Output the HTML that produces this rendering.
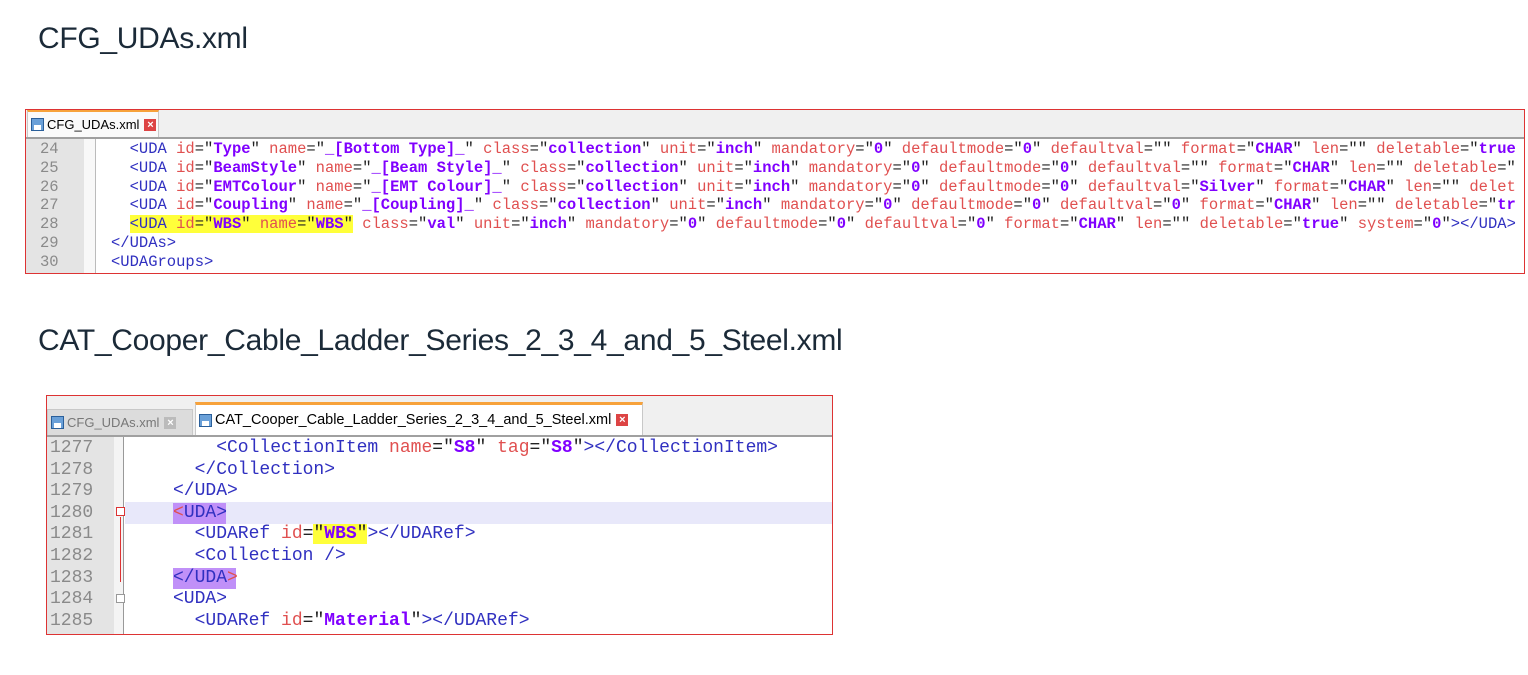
<!DOCTYPE html>
<html><head><meta charset="utf-8"><style>
body{margin:0;width:1528px;height:675px;background:#fff;position:relative;overflow:hidden;font-family:"Liberation Sans",Arial,sans-serif}
.h{position:absolute;left:38px;font-size:30px;color:#1b2a38;letter-spacing:-0.3px}
.box{position:absolute;border:1px solid #d33;background:#fff;overflow:hidden}
.tabbar{position:absolute;left:0;top:0;right:0;background:#f0f0f0;border-bottom:2px solid #a0a0a0}
.tab{position:absolute;top:4px;height:100%;font-size:13px;color:#000;display:flex;align-items:center;padding-left:3px;box-sizing:border-box;background:#fafafa;border:1px solid #c8c8c8;border-bottom:none}
.tab.act{border-top:3px solid #f7a23b}
.tab.in{background:#dcdcdc;color:#777}
.ic{width:13px;height:13px;background:#6aa0d8;border:1px solid #2a5f9a;box-sizing:border-box;margin-right:3px;position:relative}
.ic:after{content:"";position:absolute;left:2px;right:2px;bottom:0;height:5px;background:#fff}
.x{width:12px;height:12px;background:#d44;color:#fff;font-size:11px;line-height:12px;text-align:center;margin-left:5px;font-weight:bold}
.tab.in .x{background:#bbb}
.gut{position:absolute;left:0;bottom:0;background:#e4e4e4}
.fold{position:absolute;bottom:0;background:#f4f4f4;border-right:1px solid #999}
pre{margin:0;position:absolute;font-family:"Liberation Mono","Courier New",monospace;white-space:pre}
.ln{color:#8a8a8a}
.t{color:#3030c0}.a{color:#e05050}.v{color:#8000ff;font-weight:bold}.k{color:#222}
.hl{background:#ffff3a}.pu{background:#c090f8}
</style></head><body>
<div class="h" style="top:22px">CFG_UDAs.xml</div>
<div class="h" style="top:324px">CAT_Cooper_Cable_Ladder_Series_2_3_4_and_5_Steel.xml</div>

<div class="box" style="left:25px;top:109px;width:1498px;height:163px">
 <div class="tabbar" style="height:27px"><div class="tab act" style="left:1px;width:132px;top:0;height:27px;border-top:2px solid #f7a23b"><div class="ic"></div>CFG_UDAs.xml<div class="x">×</div></div></div>
 <div class="gut" style="top:29px;width:58px"></div>
 <div class="fold" style="top:29px;left:58px;width:11px;background:#f8f8f8;border-right:1px solid #bbb"></div>
 <pre class="ln" style="left:14px;top:30px;font-size:15.5px;line-height:18.8px">24
25
26
27
28
29
30</pre>
 <pre style="left:85px;top:30px;font-size:15.5px;line-height:18.8px;letter-spacing:0"><span class="t">  &lt;UDA </span><span class="a">id</span><span class="k">="</span><span class="v">Type</span><span class="k">"</span><span class="a"> name</span><span class="k">="</span><span class="v">_[Bottom Type]_</span><span class="k">"</span><span class="a"> class</span><span class="k">="</span><span class="v">collection</span><span class="k">"</span><span class="a"> unit</span><span class="k">="</span><span class="v">inch</span><span class="k">"</span><span class="a"> mandatory</span><span class="k">="</span><span class="v">0</span><span class="k">"</span><span class="a"> defaultmode</span><span class="k">="</span><span class="v">0</span><span class="k">"</span><span class="a"> defaultval</span><span class="k">=""</span><span class="a"> format</span><span class="k">="</span><span class="v">CHAR</span><span class="k">"</span><span class="a"> len</span><span class="k">=""</span><span class="a"> deletable</span><span class="k">="</span><span class="v">true</span>
<span class="t">  &lt;UDA </span><span class="a">id</span><span class="k">="</span><span class="v">BeamStyle</span><span class="k">"</span><span class="a"> name</span><span class="k">="</span><span class="v">_[Beam Style]_</span><span class="k">"</span><span class="a"> class</span><span class="k">="</span><span class="v">collection</span><span class="k">"</span><span class="a"> unit</span><span class="k">="</span><span class="v">inch</span><span class="k">"</span><span class="a"> mandatory</span><span class="k">="</span><span class="v">0</span><span class="k">"</span><span class="a"> defaultmode</span><span class="k">="</span><span class="v">0</span><span class="k">"</span><span class="a"> defaultval</span><span class="k">=""</span><span class="a"> format</span><span class="k">="</span><span class="v">CHAR</span><span class="k">"</span><span class="a"> len</span><span class="k">=""</span><span class="a"> deletable</span><span class="k">="</span>
<span class="t">  &lt;UDA </span><span class="a">id</span><span class="k">="</span><span class="v">EMTColour</span><span class="k">"</span><span class="a"> name</span><span class="k">="</span><span class="v">_[EMT Colour]_</span><span class="k">"</span><span class="a"> class</span><span class="k">="</span><span class="v">collection</span><span class="k">"</span><span class="a"> unit</span><span class="k">="</span><span class="v">inch</span><span class="k">"</span><span class="a"> mandatory</span><span class="k">="</span><span class="v">0</span><span class="k">"</span><span class="a"> defaultmode</span><span class="k">="</span><span class="v">0</span><span class="k">"</span><span class="a"> defaultval</span><span class="k">="</span><span class="v">Silver</span><span class="k">"</span><span class="a"> format</span><span class="k">="</span><span class="v">CHAR</span><span class="k">"</span><span class="a"> len</span><span class="k">=""</span><span class="a"> delet</span>
<span class="t">  &lt;UDA </span><span class="a">id</span><span class="k">="</span><span class="v">Coupling</span><span class="k">"</span><span class="a"> name</span><span class="k">="</span><span class="v">_[Coupling]_</span><span class="k">"</span><span class="a"> class</span><span class="k">="</span><span class="v">collection</span><span class="k">"</span><span class="a"> unit</span><span class="k">="</span><span class="v">inch</span><span class="k">"</span><span class="a"> mandatory</span><span class="k">="</span><span class="v">0</span><span class="k">"</span><span class="a"> defaultmode</span><span class="k">="</span><span class="v">0</span><span class="k">"</span><span class="a"> defaultval</span><span class="k">="</span><span class="v">0</span><span class="k">"</span><span class="a"> format</span><span class="k">="</span><span class="v">CHAR</span><span class="k">"</span><span class="a"> len</span><span class="k">=""</span><span class="a"> deletable</span><span class="k">="</span><span class="v">tr</span>
  <span class="hl"><span class="t">&lt;UDA </span><span class="a">id</span><span class="k">="</span><span class="v">WBS</span><span class="k">"</span><span class="a"> name</span><span class="k">="</span><span class="v">WBS</span><span class="k">"</span></span><span class="a"> class</span><span class="k">="</span><span class="v">val</span><span class="k">"</span><span class="a"> unit</span><span class="k">="</span><span class="v">inch</span><span class="k">"</span><span class="a"> mandatory</span><span class="k">="</span><span class="v">0</span><span class="k">"</span><span class="a"> defaultmode</span><span class="k">="</span><span class="v">0</span><span class="k">"</span><span class="a"> defaultval</span><span class="k">="</span><span class="v">0</span><span class="k">"</span><span class="a"> format</span><span class="k">="</span><span class="v">CHAR</span><span class="k">"</span><span class="a"> len</span><span class="k">=""</span><span class="a"> deletable</span><span class="k">="</span><span class="v">true</span><span class="k">"</span><span class="a"> system</span><span class="k">="</span><span class="v">0</span><span class="k">"</span><span class="t">&gt;&lt;/UDA&gt;</span>
<span class="t">&lt;/UDAs&gt;</span>
<span class="t">&lt;UDAGroups&gt;</span></pre>
</div>

<div class="box" style="left:46px;top:395px;width:785px;height:238px">
 <div class="tabbar" style="height:39px"></div>
 <div class="tab in" style="left:0;top:13px;height:26px;width:146px"><div class="ic"></div>CFG_UDAs.xml<div class="x">×</div></div>
 <div class="tab act" style="left:148px;top:6px;height:33px;width:448px;background:#fff;font-size:14.5px"><div class="ic"></div>CAT_Cooper_Cable_Ladder_Series_2_3_4_and_5_Steel.xml<div class="x">×</div></div>
 <div class="gut" style="top:41px;width:67px"></div>
 <div class="fold" style="top:41px;left:67px;width:9px"></div>
 <div style="position:absolute;left:78px;right:0;top:106px;height:22px;background:#e8e8fa"></div>
 <div class="pu" style="position:absolute;left:126px;top:107px;width:53px;height:21px"></div>
 <div class="pu" style="position:absolute;left:126px;top:172px;width:63px;height:21px"></div>
 <div style="position:absolute;left:69px;top:111px;width:9px;height:9px;border:1px solid #d33;box-sizing:border-box;background:#fff"></div>
 <div style="position:absolute;left:73px;top:121px;width:1px;height:65px;background:#d33"></div>
 <div style="position:absolute;left:69px;top:198px;width:9px;height:9px;border:1px solid #999;box-sizing:border-box;background:#fff"></div>
 <pre class="ln" style="left:3px;top:42px;font-size:18px;line-height:21.6px">1277
1278
1279
1280
1281
1282
1283
1284
1285</pre>
 <pre style="left:126px;top:42px;font-size:18px;line-height:21.6px"><span class="t">    &lt;CollectionItem </span><span class="a">name</span><span class="k">="</span><span class="v">S8</span><span class="k">"</span><span class="a"> tag</span><span class="k">="</span><span class="v">S8</span><span class="k">"</span><span class="t">&gt;&lt;/CollectionItem&gt;</span>
<span class="t">  &lt;/Collection&gt;</span>
<span class="t">&lt;/UDA&gt;</span>
<span class="a">&lt;</span><span class="t">UDA&gt;</span>
<span class="t">  &lt;UDARef </span><span class="a">id</span><span class="k">=</span><span class="hl"><span class="k">"</span><span class="v">WBS</span><span class="k">"</span></span><span class="t">&gt;&lt;/UDARef&gt;</span>
<span class="t">  &lt;Collection /&gt;</span>
<span class="t">&lt;/UDA</span><span class="a">&gt;</span>
<span class="t">&lt;UDA&gt;</span>
<span class="t">  &lt;UDARef </span><span class="a">id</span><span class="k">="</span><span class="v">Material</span><span class="k">"</span><span class="t">&gt;&lt;/UDARef&gt;</span></pre>
</div>
</body></html>
